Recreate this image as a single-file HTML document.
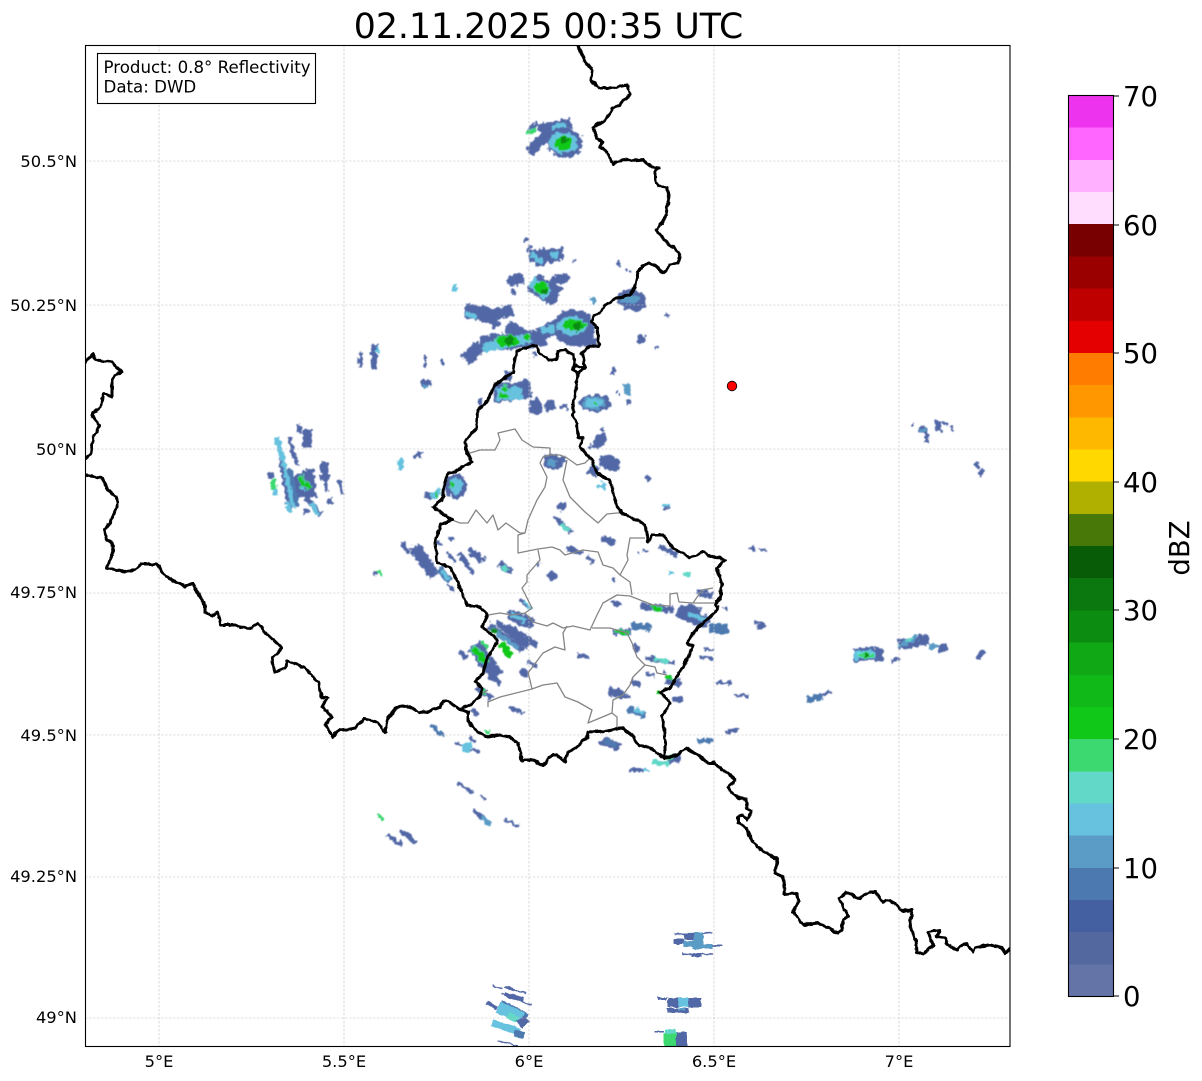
<!DOCTYPE html>
<html><head><meta charset="utf-8"><style>
html,body{margin:0;padding:0;background:#fff}
svg{display:block}
text{font-family:"DejaVu Sans","Liberation Sans",sans-serif;fill:#000}
.a{stroke:#5268a6;fill:none}.b{stroke:#4c7ab0;fill:none}.l{stroke:#5b9cc6;fill:none}.c{stroke:#66c2de;fill:none}.d{stroke:#62d8c8;fill:none}.e{stroke:#3cd870;fill:none}.f{stroke:#10c818;fill:none}.g{stroke:#0a8c10;fill:none}
.A{fill:#5268a6}.B{fill:#4c7ab0}.L{fill:#5b9cc6}.C{fill:#66c2de}.D{fill:#62d8c8}.E{fill:#3cd870}.F{fill:#10c818}.G{fill:#0a8c10}
</style></head><body>
<svg width="1202" height="1081" viewBox="0 0 1202 1081" xmlns="http://www.w3.org/2000/svg">
<defs>
<clipPath id="ax"><rect x="85.500" y="45.500" width="924.500" height="1001"/></clipPath>
<filter id="rad" filterUnits="userSpaceOnUse" x="0" y="0" width="1202" height="1081" color-interpolation-filters="sRGB">
<feMorphology in="SourceGraphic" operator="dilate" radius="0.600" result="m"/>
<feTurbulence type="fractalNoise" baseFrequency="0.22" numOctaves="2" seed="4" result="n"/>
<feDisplacementMap in="m" in2="n" scale="7" xChannelSelector="R" yChannelSelector="G" result="d"/>
<feGaussianBlur in="d" stdDeviation="0.400"/>
</filter>
<filter id="bor" filterUnits="userSpaceOnUse" x="0" y="0" width="1202" height="1081" color-interpolation-filters="sRGB">
<feTurbulence type="fractalNoise" baseFrequency="0.16" numOctaves="2" seed="9" result="n"/>
<feDisplacementMap in="SourceGraphic" in2="n" scale="3.500" xChannelSelector="R" yChannelSelector="G"/>
</filter>
</defs>
<rect width="1202" height="1081" fill="#fff"/>
<text x="548.500" y="38" font-size="34.700" text-anchor="middle">02.11.2025 00:35 UTC</text>

<!-- radar echoes -->
<g clip-path="url(#ax)"><g filter="url(#rad)">
<!-- top cluster A -->
<path class="a" stroke-width="9" d="M529 152L547 134"/>
<path class="a" stroke-width="4" d="M528 132L538 123"/>
<path class="e" stroke-width="4" d="M527 133L536 129"/>
<path class="a" stroke-width="9" d="M540 129L571 123"/>
<path class="a" stroke-width="10" d="M542 138L560 130"/>
<path class="c" stroke-width="3" d="M552 128L566 124"/>
<ellipse class="A" cx="565" cy="143" rx="17" ry="14"/>
<ellipse class="C" cx="563" cy="143" rx="14" ry="10"/>
<ellipse class="F" cx="563" cy="143" rx="9" ry="8"/>
<ellipse class="G" cx="564" cy="140" rx="5" ry="4"/>
<!-- cluster B -->
<path class="a" stroke-width="2" d="M524 243L527 239M527 252L531 246"/>
<path class="a" stroke-width="11" d="M530 256L563 254"/>
<path class="a" stroke-width="6" d="M536 263L552 259"/>
<path class="c" stroke-width="4" d="M532 254L541 262M551 256L558 254"/>
<path class="a" stroke-width="2" d="M572 262L575 260"/>
<!-- C/D -->
<ellipse class="A" cx="516" cy="280" rx="8" ry="6"/>
<circle class="A" cx="513" cy="292" r="2.500"/>
<path class="a" stroke-width="19" d="M533 282L557 297"/>
<path class="a" stroke-width="7" d="M552 281L568 277"/>
<path class="c" stroke-width="11" d="M532 282L548 294"/>
<ellipse class="F" cx="541" cy="288" rx="8" ry="6" transform="rotate(30 541 288)"/>
<ellipse class="G" cx="544" cy="292" rx="3.500" ry="3"/>
<path class="c" stroke-width="3" d="M455 285L454 291"/>
<!-- E -->
<path class="a" stroke-width="14" d="M466 311L490 316"/>
<path class="a" stroke-width="10" d="M488 316L512 310"/>
<path class="a" stroke-width="8" d="M490 318L497 326"/>
<path class="c" stroke-width="4" d="M467 313L476 318"/>
<!-- F -->
<path class="a" stroke-width="12" d="M466 360L480 346"/>
<path class="a" stroke-width="15" d="M480 344L545 338"/>
<path class="a" stroke-width="10" d="M508 326L530 338"/>
<path class="a" stroke-width="12" d="M540 335L558 325"/>
<path class="c" stroke-width="9" d="M484 348L530 338"/>
<path class="c" stroke-width="7" d="M542 331L556 328"/>
<ellipse class="F" cx="507" cy="341" rx="12" ry="6"/>
<ellipse class="G" cx="509" cy="341" rx="5" ry="5"/>
<ellipse class="F" cx="527" cy="337" rx="3.500" ry="3"/>
<path class="a" stroke-width="4" d="M534 352L536 356"/>
<!-- G -->
<ellipse class="A" cx="574" cy="328" rx="20" ry="18"/>
<path class="a" stroke-width="8" d="M583 343L597 342"/>
<ellipse class="C" cx="572" cy="326" rx="14" ry="9"/>
<ellipse class="F" cx="574" cy="325" rx="12" ry="6"/>
<ellipse class="G" cx="577" cy="327" rx="5" ry="5"/>
<!-- H + small -->
<ellipse class="A" cx="632" cy="300" rx="14" ry="10" transform="rotate(15 632 300)"/>
<ellipse class="L" cx="630" cy="299" rx="9" ry="4"/>
<circle class="L" cx="593" cy="300" r="3"/>
<circle class="A" cx="642" cy="339" r="4"/>
<path class="a" stroke-width="2" d="M617 262L621 266M625 270L628 270M630 272L631 272M666 315L668 316M656 348L657 349"/>
<!-- I -->
<path class="a" stroke-width="17" d="M494 394L530 389"/>
<path class="c" stroke-width="12" d="M496 394L522 393"/>
<ellipse class="F" cx="505" cy="389" rx="4" ry="3"/>
<ellipse class="F" cx="504" cy="396" rx="5" ry="3"/>
<path class="a" stroke-width="4" d="M480 399V405"/>
<path class="a" stroke-width="6" d="M508 372V380"/>
<ellipse class="A" cx="536" cy="407" rx="6" ry="8"/>
<ellipse class="A" cx="550" cy="406" rx="5" ry="5"/>
<path class="a" stroke-width="3" d="M561 406H567M566 409H568"/>
<path class="a" stroke-width="9" d="M426 380V386"/><path class="l" stroke-width="5" d="M426 385V388"/>
<path class="a" stroke-width="2" d="M425 356V366M443 359V364"/>
<path class="a" stroke-width="3" d="M361 353L360 367"/>
<path class="a" stroke-width="5" d="M374 345V370"/>
<path class="c" stroke-width="3" d="M378 348V352"/>
<!-- K -->
<ellipse class="A" cx="595" cy="403" rx="15" ry="8"/>
<ellipse class="L" cx="594" cy="403" rx="11" ry="6"/>
<ellipse class="C" cx="594" cy="403" rx="8" ry="4"/>
<path class="f" stroke-width="3" d="M593 401L597 405"/>
<path class="a" stroke-width="3" d="M613 367V373M628 400L629 405M616 392H618"/>
<path class="l" stroke-width="5" d="M626 384L628 394"/>
<ellipse class="A" cx="600" cy="441" rx="8" ry="5" transform="rotate(-50 600 441)"/>
<path class="a" stroke-width="3" d="M589 448L592 446M601 430L604 429"/>
<ellipse class="A" cx="553" cy="462" rx="10" ry="7" transform="rotate(20 553 462)"/>
<path class="a" stroke-width="4" d="M562 459L566 459"/>
<path class="l" stroke-width="4" d="M549 461L555 465"/>
<ellipse class="A" cx="610" cy="463" rx="11" ry="7" transform="rotate(20 610 463)"/>
<path class="a" stroke-width="10" d="M590 468L597 472"/>
<path class="e" stroke-width="3" d="M594 465V467"/>
<path class="c" stroke-width="6" d="M600 484L605 488"/>
<path class="a" stroke-width="3" d="M645 477L650 479M664 507L670 507"/>
<path class="c" stroke-width="3" d="M662 506H670"/>
<!-- west cluster -->
<path class="a" stroke-width="8" d="M446 484L460 492"/>
<ellipse class="A" cx="456" cy="486" rx="10" ry="12"/>
<ellipse class="C" cx="456" cy="486" rx="6" ry="8"/>
<path class="f" stroke-width="4" d="M452 481V488"/>
<path class="a" stroke-width="4" d="M425 495L432 497"/>
<path class="c" stroke-width="5" d="M432 497L440 491"/>
<path class="f" stroke-width="3" d="M437 492V496"/>
<path class="a" stroke-width="2" d="M415 458L418 452M420 452L420 459"/>
<path class="c" stroke-width="4" d="M401 460V470"/>
<!-- left big -->
<path class="c" stroke-width="4" d="M277 438L282 458M282 458L293 505"/>
<path class="a" stroke-width="3" d="M289 438L297 465"/>
<path class="a" stroke-width="3" d="M280 460L290 510"/>
<path class="a" stroke-width="3" d="M298 425L300 432"/>
<path class="a" stroke-width="8" d="M307 430V447"/>
<path class="a" stroke-width="14" d="M298 475L303 495"/>
<path class="a" stroke-width="9" d="M308 470L312 498"/>
<path class="b" stroke-width="5" d="M290 470L296 505"/>
<path class="c" stroke-width="3" d="M288 486L294 508"/>
<path class="a" stroke-width="4" d="M304 495L320 515"/>
<path class="c" stroke-width="3" d="M311 503L318 514"/>
<path class="a" stroke-width="7" d="M325 463V480"/>
<path class="a" stroke-width="3" d="M325 480L327 490"/>
<path class="a" stroke-width="3" d="M339 481L343 494M330 499V504"/>
<path class="a" stroke-width="4" d="M270 473L271 478"/>
<path class="e" stroke-width="4" d="M272 481L275 489"/>
<path class="c" stroke-width="4" d="M275 489L276 495"/>
<path class="c" stroke-width="3" d="M303 483V490"/>
<path class="f" stroke-width="5" d="M301 476L303 487M306 483L310 488"/>
<path class="c" stroke-width="3" d="M287 503L290 512"/>
<path class="a" stroke-width="4" d="M305 509L306 513"/>
<path class="e" stroke-width="2" d="M378 571L381 575"/><path class="a" stroke-width="1.500" d="M376 572L375 576"/>
<!-- Luxembourg area -->
<path class="a" stroke-width="3" d="M402 543L408 553"/>
<path class="a" stroke-width="6" d="M412 547L432 577"/>
<path class="a" stroke-width="4" d="M418 546L436 572"/>
<path class="a" stroke-width="2" d="M438 541L441 545M451 538L452 542M448 553L455 562M448 585L454 590"/>
<path class="b" stroke-width="6" d="M439 569L450 580"/><path class="c" stroke-width="3" d="M442 571L448 578"/>
<path class="a" stroke-width="3" d="M459 553L473 573"/>
<path class="a" stroke-width="5" d="M469 550L484 561"/>
<path class="a" stroke-width="5" d="M500 563L511 572"/><path class="d" stroke-width="3" d="M503 566L507 570"/>
<path class="a" stroke-width="7" d="M549 573L554 578"/>
<path class="a" stroke-width="2" d="M538 563L539 565"/>
<path class="a" stroke-width="3" d="M554 517L572 532"/><path class="d" stroke-width="3" d="M561 524L568 530"/>
<circle class="A" cx="562" cy="507" r="4"/>
<path class="a" stroke-width="6" d="M602 539L615 543"/>
<path class="a" stroke-width="4" d="M568 548L581 553M587 557L593 562"/>
<path class="a" stroke-width="2" d="M613 579L615 581M638 552H640"/>
<path class="a" stroke-width="4" d="M660 547L677 555M752 547L754 551"/><path class="a" stroke-width="2" d="M644 551L648 551M760 550L766 549"/>
<path class="c" stroke-width="2" d="M670 573H673"/><path class="d" stroke-width="3" d="M683 574L691 574"/>
<path class="c" stroke-width="3" d="M523 601L531 609"/><path class="a" stroke-width="2" d="M521 600L526 606"/>
<path class="a" stroke-width="10" d="M508 614L532 624"/><path class="c" stroke-width="4" d="M512 614L525 621"/>
<path class="a" stroke-width="5" d="M489 625L522 650M497 622L528 647M507 627L537 645"/>
<path class="l" stroke-width="3" d="M494 631L518 648"/>
<path class="g" stroke-width="5" d="M492 628L498 633"/>
<path class="f" stroke-width="6" d="M501 644L510 656"/>
<path class="a" stroke-width="13" d="M474 646L497 676"/>
<path class="a" stroke-width="4" d="M460 652L466 658M490 673L500 685"/>
<path class="f" stroke-width="7" d="M473 648L487 663"/>
<path class="e" stroke-width="3" d="M482 642L488 649"/>
<path class="a" stroke-width="5" d="M521 671L528 676"/>
<path class="a" stroke-width="3" d="M528 662L537 667"/>
<path class="a" stroke-width="5" d="M478 688L491 698"/><path class="f" stroke-width="3" d="M482 690L486 694"/>
<path class="a" stroke-width="3" d="M510 707L522 713"/>
<path class="a" stroke-width="2" d="M472 710L478 714"/>
<path class="b" stroke-width="3" d="M431 725L443 735"/>
<path class="e" stroke-width="2" d="M485 731L490 733"/>
<path class="a" stroke-width="2" d="M457 743L478 752M469 738L475 742"/>
<ellipse class="C" cx="467" cy="747" rx="5" ry="4"/>
<path class="a" stroke-width="2" d="M457 783L472 792M480 796L487 799M505 820L519 826"/>
<path class="a" stroke-width="3" d="M474 811L484 818"/><path class="l" stroke-width="4" d="M482 818L491 824"/>
<path class="e" stroke-width="2" d="M378 815L384 820"/>
<path class="a" stroke-width="3" d="M387 835L402 845M401 831L416 843"/>
<path class="a" stroke-width="3" d="M613 602L620 606"/>
<path class="a" stroke-width="6" d="M641 606L673 610"/><path class="f" stroke-width="4" d="M651 607L662 610"/>
<path class="a" stroke-width="11" d="M678 611L708 623"/>
<path class="a" stroke-width="6" d="M688 606L700 613"/>
<path class="c" stroke-width="3" d="M688 614L706 620"/>
<path class="a" stroke-width="5" d="M698 592L712 595"/>
<path class="b" stroke-width="9" d="M710 628L728 629"/>
<path class="a" stroke-width="2" d="M724 608H727M755 622L764 624M757 627L766 626"/>
<path class="a" stroke-width="6" d="M613 632L630 632"/><path class="f" stroke-width="4" d="M616 631L628 633"/>
<path class="b" stroke-width="6" d="M632 626L650 628"/>
<path class="a" stroke-width="3" d="M578 655L588 657"/><circle class="A" cx="636" cy="648" r="3"/>
<path class="a" stroke-width="3" d="M646 658L673 663"/><path class="d" stroke-width="3" d="M655 659L668 662"/>
<path class="a" stroke-width="3" d="M646 674L655 675M663 671L666 672"/>
<path class="a" stroke-width="7" d="M667 680L680 683"/><path class="f" stroke-width="2" d="M666 677L672 679"/>
<path class="f" stroke-width="2" d="M657 692H662"/>
<path class="a" stroke-width="4" d="M673 699L683 700"/>
<path class="a" stroke-width="4" d="M632 681L640 685"/>
<path class="a" stroke-width="7" d="M609 691L623 695"/><path class="a" stroke-width="2" d="M623 695L631 698"/>
<path class="b" stroke-width="5" d="M629 709L645 716"/><path class="c" stroke-width="2" d="M633 709L643 713"/>
<path class="a" stroke-width="7" d="M601 741L620 747"/><path class="b" stroke-width="4" d="M605 741L615 745"/>
<path class="a" stroke-width="3" d="M630 770L643 770"/><path class="c" stroke-width="2" d="M643 769L650 770"/>
<path class="d" stroke-width="4" d="M654 762L668 764"/><path class="a" stroke-width="6" d="M668 759L680 759"/><path class="f" stroke-width="3" d="M667 758L673 757"/>
<path class="a" stroke-width="2" d="M717 683H732M733 695L748 696M705 649L713 650M700 657L713 658M727 731H738"/>
<path class="b" stroke-width="4" d="M697 741L713 740"/>
<!-- east -->
<path class="b" stroke-width="5" d="M806 699L822 697"/><path class="a" stroke-width="2" d="M820 695L830 692"/>
<path class="a" stroke-width="12" d="M854 655L882 654"/><path class="c" stroke-width="7" d="M854 655L875 654"/>
<ellipse class="E" cx="866" cy="655" rx="8" ry="3"/><ellipse class="G" cx="867" cy="655" rx="3" ry="2"/>
<path class="a" stroke-width="3" d="M891 661L899 658"/>
<path class="a" stroke-width="9" d="M899 645L928 639"/><path class="l" stroke-width="4" d="M899 646L917 637"/><path class="d" stroke-width="2" d="M907 641L913 638"/>
<path class="l" stroke-width="6" d="M930 648L936 645"/><path class="a" stroke-width="7" d="M938 649L947 647"/>
<path class="a" stroke-width="3" d="M977 659L984 651"/>
<path class="a" stroke-width="2" d="M912 423V426M943 423L947 425"/>
<path class="a" stroke-width="5" d="M920 428L926 433M938 421L939 431"/><path class="l" stroke-width="3" d="M921 430L925 431"/><path class="a" stroke-width="3" d="M927 433L927 442"/>
<path class="a" stroke-width="4" d="M975 464L979 467"/><path class="a" stroke-width="1.500" d="M982 470L980 477"/>
<path class="a" stroke-width="2" d="M951 427L953 430"/>
</g>
<!-- bottom, undisplaced blocks -->
<g filter="url(#bor)">
<path class="a" stroke-width="1.500" d="M675 934L713 933M683 954L712 954"/>
<rect class="A" x="684" y="934" width="10" height="6"/><rect class="L" x="694" y="932" width="9" height="9"/>
<rect class="A" x="674" y="939" width="10" height="5"/>
<rect class="L" x="684" y="941" width="19" height="6"/><rect class="L" x="693" y="944" width="20" height="5"/>
<rect class="A" x="713" y="945" width="9" height="2"/><rect class="A" x="692" y="953" width="10" height="4"/>
<path class="a" stroke-width="1.500" d="M493 986L503 989M515 990L526 993M501 994L532 1005M497 1040L517 1046"/>
<path class="a" stroke-width="3" d="M505 987L515 990"/>
<path class="a" stroke-width="5" d="M504 994L523 1000"/>
<path class="a" stroke-width="4" d="M487 1003L497 1008"/>
<path class="b" stroke-width="5" d="M500 1002L528 1016"/>
<path class="c" stroke-width="12" d="M498 1007L522 1018"/>
<path class="d" stroke-width="7" d="M508 1015L518 1020"/>
<path class="a" stroke-width="10" d="M520 1018L526 1025"/>
<path class="c" stroke-width="7" d="M492 1023L520 1032"/>
<path class="b" stroke-width="7" d="M514 1033L524 1035"/>
<rect class="A" x="657" y="997" width="10" height="3"/>
<rect class="A" x="668" y="998" width="33" height="9"/>
<rect class="C" x="678" y="998" width="11" height="9"/>
<rect class="A" x="667" y="1008" width="22" height="5"/>
<rect class="L" x="678" y="1008" width="7" height="2"/>
<rect class="A" x="654" y="1031" width="10" height="2"/>
<rect class="A" x="675" y="1032" width="12" height="16"/>
<rect class="D" x="665" y="1029" width="11" height="6"/>
<rect class="E" x="664" y="1034" width="12" height="14"/>
</g></g>

<!-- gridlines -->
<g stroke="#c2c2c2" stroke-width="0.600" stroke-dasharray="2.500 1.500" fill="none">
<path d="M159 45V1046M344 45V1046M529 45V1046M714 45V1046M899 45V1046"/>
<path d="M85 161H1010M85 305H1010M85 449H1010M85 593H1010M85 735H1010M85 877H1010M85 1018H1010"/>
</g>

<!-- canton lines -->
<g stroke="#858585" stroke-width="1.300" fill="none" stroke-linejoin="round">
<path d="M470 453L480 450L495 450L500 440L498 433L515 429L522 440L533 447L550 448L550 455L543 457L540 463L547 477L545 487L537 500L528 520L525 533L518 535L518 553L538 549L552 547L560 550L565 555L572 553L583 550L598 552L603 565L613 568L620 575L630 582L632 595"/>
<path d="M452 520L460 523L468 523L476 510L487 523L493 515L498 530L506 523L520 533L525 533"/>
<path d="M550 455L560 455L567 458L577 465L585 463L590 458"/>
<path d="M567 460L563 480L570 497L585 512L598 523L607 514L617 513L622 513"/>
<path d="M645 538L630 538L627 555L628 560L620 575"/>
<path d="M538 550L540 560L533 568L527 575L527 582L522 588L528 600L532 608L525 613L512 615L500 613L488 615"/>
<path d="M525 613L533 622L547 626L553 623L563 628L573 626L590 630L597 615L603 603L617 595L630 596L653 605L670 606"/>
<path d="M592 628L610 628L627 633L632 643L637 657L645 665L655 667L657 673L667 675"/>
<path d="M645 665L633 677L630 685L623 695L613 700L612 713L617 717L617 729M612 713L588 723L592 710L578 702L565 697L557 683L543 685L532 689L500 697L488 702L488 707M488 690L480 695"/>
<path d="M532 689L530 680L528 673L543 653L555 647L565 650L563 633L567 626"/>
<path d="M670 606L670 594L677 593L679 602L693 603L715 603M693 603L702 590L713 588"/>
</g>

<!-- borders -->
<g clip-path="url(#ax)"><g filter="url(#bor)" stroke="#000" stroke-width="3" fill="none" stroke-linejoin="round" stroke-linecap="round">
<path d="M578 45L585 62L592 70L591 80L598 88L612 88L627 85L630 94L622 102L620 105L613 108L610 113L605 120L597 125L593 128L597 138L603 142L599 147L605 150L610 158L613 164L622 160L628 159L633 161L643 160L652 167L659 168L655 170L655 180L658 186L667 187L669 197L667 207L666 215L662 223L656 230L663 238L667 243L675 248L680 257L678 263L670 265L663 273L657 267L650 263L642 267L638 272L635 287L630 295L617 298L605 305L600 313L593 317L592 322L597 328L599 343L598 346L587 348L582 353L584 363L585 368L578 373L577 377L576 390L573 403L574 412L572 415L577 423L578 437L583 438L580 447L585 453L592 460L597 473L603 477L610 480L613 493L617 507L622 513L637 520L645 525L648 542L653 535L663 535L673 548L690 558L703 552L715 558L720 557L725 560L717 568L722 585L720 597L715 605L718 607L715 613L697 628L687 643L693 645L687 660L678 675L670 688L660 692L670 703L662 717L665 733L665 758L677 755L686 748L700 756L708 763L715 763L722 770L728 772L735 780L728 787L732 793L738 798L746 799L747 808L752 811L747 820L743 815L738 817L738 823L747 828L749 835L757 847L765 852L777 859L775 873L783 877L785 895L797 893L799 902L793 912L803 925L818 923L838 933L842 930L843 920L848 917L839 898L847 892L859 899L870 892L876 892L882 902L890 900L903 911L912 910L910 927L916 940L917 952L923 954L933 945L928 932L940 930L937 937L945 938L948 945L957 950L960 946L967 944L973 952L975 948L988 945L1002 948L1005 953L1012 948"/>
<path d="M585 368L575 365L573 355L565 350L558 351L557 359L548 360L540 353L537 346L527 347L517 351L513 372L495 385L488 400L478 410L477 427L465 442L467 452L472 462L462 467L455 472L448 473L445 483L442 500L433 507L442 513L452 520L440 525L435 542L437 563L450 567L457 580L467 605L480 607L488 615L482 627L495 637L497 642L487 658L483 673L475 682L482 688L480 697L470 705L460 709L468 712L468 722L478 732L488 737L500 735L510 737L518 743L522 760L532 760L543 765L552 755L557 755L565 762L568 752L575 748L587 738L588 732L607 731L622 728L632 735L638 745L650 748L665 758"/>
<path d="M585 368L578 373L573 370L575 365"/>
<path d="M84 363L93 354L96 360L113 362L117 368L121 371L112 380L112 397L103 393L101 408L92 413L95 420L100 426L93 437L91 453L84 460"/>
<path d="M84 475L102 478L108 490L117 497L117 507L110 523L104 530L107 540L112 543L113 553L106 568L112 569L125 572L135 570L142 564L157 564L166 577L185 586L193 584L205 605L205 612L212 616L218 612L221 625L235 625L240 627L251 628L258 623L265 632L282 648L273 657L272 662L275 672L285 668L287 661L305 668L318 682L322 697L327 698L322 707L332 717L325 725L333 737L338 731L355 728L364 719L377 722L385 732L388 718L397 707L403 706L412 708L420 713L430 711L440 707L445 700L460 709"/>
</g></g>

<!-- dot -->
<circle cx="732" cy="386" r="4.800" fill="#f00" stroke="#000" stroke-width="0.800"/>

<!-- axes frame -->
<rect x="85.500" y="45.500" width="924.500" height="1001" fill="none" stroke="#000" stroke-width="1.100"/>

<!-- info box -->
<rect x="97.500" y="53.500" width="218" height="50" fill="#fff" stroke="#000" stroke-width="1.100"/>
<text x="103.500" y="73" font-size="16.650">Product: 0.8° Reflectivity</text>
<text x="103.500" y="92.500" font-size="16.650">Data: DWD</text>

<!-- lat labels -->
<g font-size="16.300" text-anchor="end">
<text x="77" y="167">50.5°N</text>
<text x="77" y="311">50.25°N</text>
<text x="77" y="455">50°N</text>
<text x="77" y="598">49.75°N</text>
<text x="77" y="741">49.5°N</text>
<text x="77" y="882">49.25°N</text>
<text x="77" y="1023">49°N</text>
</g>
<g font-size="16.300" text-anchor="middle">
<text x="159" y="1067">5°E</text>
<text x="344" y="1067">5.5°E</text>
<text x="529" y="1067">6°E</text>
<text x="714" y="1067">6.5°E</text>
<text x="899" y="1067">7°E</text>
</g>

<!-- colorbar -->
<g shape-rendering="crispEdges">
<rect x="1068" y="95.500" width="45" height="32.400" fill="#ee33ee"/>
<rect x="1068" y="127.700" width="45" height="32.400" fill="#ff66ff"/>
<rect x="1068" y="159.900" width="45" height="32.400" fill="#ffb0ff"/>
<rect x="1068" y="192" width="45" height="32.400" fill="#ffddff"/>
<rect x="1068" y="224.200" width="45" height="32.400" fill="#780000"/>
<rect x="1068" y="256.400" width="45" height="32.400" fill="#9a0000"/>
<rect x="1068" y="288.600" width="45" height="32.400" fill="#be0000"/>
<rect x="1068" y="320.800" width="45" height="32.400" fill="#e40000"/>
<rect x="1068" y="353" width="45" height="32.400" fill="#ff7c00"/>
<rect x="1068" y="385.100" width="45" height="32.400" fill="#ff9800"/>
<rect x="1068" y="417.300" width="45" height="32.400" fill="#ffb800"/>
<rect x="1068" y="449.500" width="45" height="32.400" fill="#ffd800"/>
<rect x="1068" y="481.700" width="45" height="32.400" fill="#b0b000"/>
<rect x="1068" y="513.900" width="45" height="32.400" fill="#487808"/>
<rect x="1068" y="546" width="45" height="32.400" fill="#085c08"/>
<rect x="1068" y="578.200" width="45" height="32.400" fill="#0a780e"/>
<rect x="1068" y="610.400" width="45" height="32.400" fill="#0c8c10"/>
<rect x="1068" y="642.600" width="45" height="32.400" fill="#10a814"/>
<rect x="1068" y="674.800" width="45" height="32.400" fill="#10b818"/>
<rect x="1068" y="707" width="45" height="32.400" fill="#10c818"/>
<rect x="1068" y="739.100" width="45" height="32.400" fill="#3cd870"/>
<rect x="1068" y="771.300" width="45" height="32.400" fill="#62d8c8"/>
<rect x="1068" y="803.500" width="45" height="32.400" fill="#66c2de"/>
<rect x="1068" y="835.700" width="45" height="32.400" fill="#5b9cc6"/>
<rect x="1068" y="867.900" width="45" height="32.400" fill="#4c7ab0"/>
<rect x="1068" y="900" width="45" height="32.400" fill="#4560a0"/>
<rect x="1068" y="932.200" width="45" height="32.400" fill="#5468a0"/>
<rect x="1068" y="964.400" width="45" height="32.100" fill="#6474a6"/>
</g>
<rect x="1068.500" y="95.500" width="45" height="901" fill="none" stroke="#000" stroke-width="1.100"/>
<path d="M1113 96H1119M1113 225H1119M1113 353H1119M1113 482H1119M1113 610H1119M1113 739H1119M1113 868H1119M1113 996H1119" stroke="#000" stroke-width="1.100" fill="none"/>
<g font-size="27.500">
<text x="1123" y="106">70</text>
<text x="1123" y="235">60</text>
<text x="1123" y="363">50</text>
<text x="1123" y="492">40</text>
<text x="1123" y="620">30</text>
<text x="1123" y="749">20</text>
<text x="1123" y="878">10</text>
<text x="1123" y="1006">0</text>
</g>
<text transform="translate(1189 548) rotate(-90)" font-size="27.500" text-anchor="middle">dBZ</text>
</svg>
</body></html>
